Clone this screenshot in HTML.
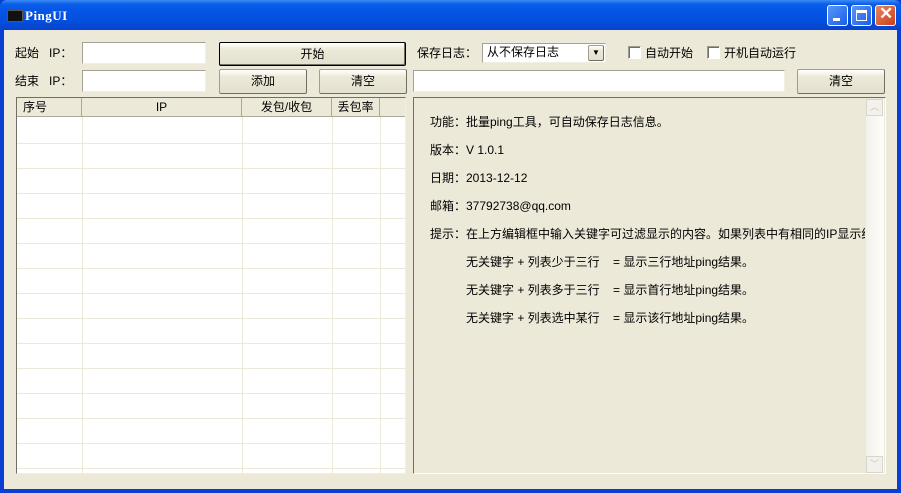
<!DOCTYPE html>
<html><head><meta charset="utf-8"><style>
*{margin:0;padding:0;box-sizing:border-box}
body{width:901px;height:493px;overflow:hidden;background:#0a3fd6;font-family:"Liberation Sans","Noto Sans CJK SC",sans-serif;font-size:12px;color:#000;position:relative}
.a{position:absolute}
#title{left:0;top:0;width:901px;height:30px;background:linear-gradient(#3d8cf7 0,#0b5fe8 4px,#0656e6 10px,#0450df 20px,#0646cf 28px,#0a3fd6 30px);border-radius:7px 7px 0 0}
#client{left:4px;top:30px;width:893px;height:459px;background:#ece9d8}
.in{background:#fff;border:1px solid #7f9db9;border-top-color:#a5a295;border-left-color:#a5a295;border-right-color:#f1efe2;border-bottom-color:#f1efe2}
.btn{background:linear-gradient(#fff,#ece9d8 30%,#e3e0d0);border:1px solid #a09e8e;border-right-color:#716f64;border-bottom-color:#716f64;text-align:center;line-height:22px;border-radius:2px}
.lbl{line-height:14px}
.cb{width:13px;height:13px;background:#fff;border:1px solid #1c5180;border-color:#9d9b8e #fff #fff #9d9b8e;box-shadow:inset 1px 1px 0 #716f64}
.hd{top:98px;height:19px;background:#ece9d8;border-right:1px solid #aca899;border-bottom:1px solid #aca899;line-height:19px}
.tb{width:21px;height:21px;top:5px;border:1px solid #fff;border-radius:3px;background:linear-gradient(135deg,#5a96f8,#1a5ee8)}
.t{left:16px;font-size:12px;line-height:14px;white-space:nowrap}
</style></head><body>
<div id="title" class="a"></div>
<div class="a" style="left:7px;top:10px;width:16px;height:12px;background:#111;border:1px solid #555"></div>
<div class="a" style="left:25px;top:8px;color:#fff;font-family:'Liberation Serif',serif;font-weight:bold;font-size:13px;letter-spacing:0.5px">PingUI</div>
<div class="a tb" style="left:827px"><div class="a" style="left:5px;top:12px;width:7px;height:3px;background:#fff"></div></div>
<div class="a tb" style="left:851px"><div class="a" style="left:4px;top:4px;width:11px;height:11px;border:1px solid #fff;border-top-width:3px"></div></div>
<div class="a tb" style="left:875px;background:linear-gradient(135deg,#e8845e,#c9401a)"><div class="a" style="left:3px;top:-2px;color:#fff;font-size:17px;font-weight:bold">✕</div></div>
<div id="client" class="a"></div>

<div class="a lbl" style="left:15px;top:46px">起始&nbsp;&nbsp;&nbsp;IP：</div>
<div class="a in" style="left:82px;top:42px;width:124px;height:22px"></div>
<div class="a btn" style="left:219px;top:42px;width:187px;height:24px;border:1px solid #000;box-shadow:inset -1px -1px 0 #716f64">开始</div>
<div class="a lbl" style="left:417px;top:46px">保存日志：</div>
<div class="a in" style="left:482px;top:43px;width:124px;height:20px;line-height:17px;padding-left:4px">从不保存日志</div>
<div class="a btn" style="left:588px;top:45px;width:16px;height:16px;line-height:14px;font-size:8px">▼</div>
<div class="a cb" style="left:628px;top:46px"></div>
<div class="a lbl" style="left:645px;top:46px">自动开始</div>
<div class="a cb" style="left:707px;top:46px"></div>
<div class="a lbl" style="left:724px;top:46px">开机自动运行</div>

<div class="a lbl" style="left:15px;top:74px">结束&nbsp;&nbsp;&nbsp;IP：</div>
<div class="a in" style="left:82px;top:70px;width:124px;height:22px"></div>
<div class="a btn" style="left:219px;top:69px;width:88px;height:25px">添加</div>
<div class="a btn" style="left:319px;top:69px;width:88px;height:25px">清空</div>
<div class="a in" style="left:413px;top:70px;width:372px;height:22px"></div>
<div class="a btn" style="left:797px;top:69px;width:88px;height:25px">清空</div>

<div class="a" style="left:16px;top:97px;width:390px;height:377px;background:#fff;border:1px solid;border-color:#716f64 #f1efe2 #f1efe2 #716f64;overflow:hidden">
<svg class="a" style="left:0;top:0" width="390" height="377">
<g stroke="#ece9d8" stroke-width="1">
<line x1="65.5" y1="19" x2="65.5" y2="377"/><line x1="225.5" y1="19" x2="225.5" y2="377"/><line x1="315.5" y1="19" x2="315.5" y2="377"/><line x1="363.5" y1="19" x2="363.5" y2="377"/>
<line x1="0" y1="45.5" x2="388" y2="45.5"/><line x1="0" y1="70.5" x2="388" y2="70.5"/><line x1="0" y1="95.5" x2="388" y2="95.5"/><line x1="0" y1="120.5" x2="388" y2="120.5"/><line x1="0" y1="145.5" x2="388" y2="145.5"/><line x1="0" y1="170.5" x2="388" y2="170.5"/><line x1="0" y1="195.5" x2="388" y2="195.5"/><line x1="0" y1="220.5" x2="388" y2="220.5"/><line x1="0" y1="245.5" x2="388" y2="245.5"/><line x1="0" y1="270.5" x2="388" y2="270.5"/><line x1="0" y1="295.5" x2="388" y2="295.5"/><line x1="0" y1="320.5" x2="388" y2="320.5"/><line x1="0" y1="345.5" x2="388" y2="345.5"/><line x1="0" y1="370.5" x2="388" y2="370.5"/>
</g></svg>
</div>
<div class="a hd" style="left:17px;width:65px;padding-left:6px">序号</div>
<div class="a hd" style="left:82px;width:160px;text-align:center">IP</div>
<div class="a hd" style="left:242px;width:90px;text-align:center">发包/收包</div>
<div class="a hd" style="left:332px;width:48px;text-align:center">丢包率</div>
<div class="a hd" style="left:380px;width:25px;border-right:none"></div>

<div class="a" style="left:413px;top:97px;width:473px;height:377px;border:1px solid;border-color:#716f64 #fff #fff #716f64;overflow:hidden">
<div class="a" style="left:452px;top:1px;width:18px;height:373px;background:linear-gradient(90deg,#f3f1ea,#fdfdfb)"></div>
<div class="a" style="left:452px;top:1px;width:17px;height:17px;border:1px solid #d8d6cc;background:#f2f1ec;color:#c4c2b8;font-size:9px;text-align:center;line-height:15px">︿</div>
<div class="a" style="left:452px;top:358px;width:17px;height:17px;border:1px solid #d8d6cc;background:#f2f1ec;color:#c4c2b8;font-size:9px;text-align:center;line-height:15px">﹀</div>
<div class="a" style="left:0;top:0;width:451px;height:375px;overflow:hidden">
<div class="a t" style="top:17px">功能：批量ping工具，可自动保存日志信息。</div>
<div class="a t" style="top:45px">版本：V 1.0.1</div>
<div class="a t" style="top:73px">日期：2013-12-12</div>
<div class="a t" style="top:101px">邮箱：37792738@qq.com</div>
<div class="a t" style="top:129px">提示：在上方编辑框中输入关键字可过滤显示的内容。如果列表中有相同的IP显示结果</div>
<div class="a t" style="left:52px;top:157px">无关键字 + 列表少于三行&nbsp;&nbsp;&nbsp;&nbsp;= 显示三行地址ping结果。</div>
<div class="a t" style="left:52px;top:185px">无关键字 + 列表多于三行&nbsp;&nbsp;&nbsp;&nbsp;= 显示首行地址ping结果。</div>
<div class="a t" style="left:52px;top:213px">无关键字 + 列表选中某行&nbsp;&nbsp;&nbsp;&nbsp;= 显示该行地址ping结果。</div>
</div>
</div>
</body></html>
